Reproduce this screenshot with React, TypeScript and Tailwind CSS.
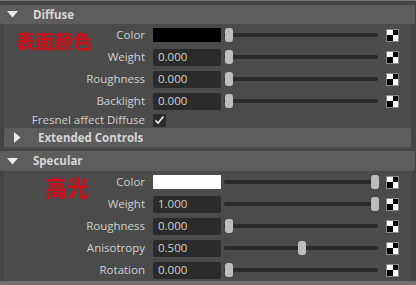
import React from "react";

type Row = {
  label: string;
  value?: string;
  swatch?: string;
  pos: number;
};

const DIFFUSE: Row[] = [
  { label: "Color", swatch: "#000000", pos: 0 },
  { label: "Weight", value: "0.000", pos: 0 },
  { label: "Roughness", value: "0.000", pos: 0 },
  { label: "Backlight", value: "0.000", pos: 0 },
];

const SPECULAR: Row[] = [
  { label: "Color", swatch: "#ffffff", pos: 1 },
  { label: "Weight", value: "1.000", pos: 1 },
  { label: "Roughness", value: "0.000", pos: 0 },
  { label: "Anisotropy", value: "0.500", pos: 0.5 },
  { label: "Rotation", value: "0.000", pos: 0 },
];

function Checker() {
  return (
    <div className="w-[13px] h-[13px] border border-[#8a8a8a] grid grid-cols-2 grid-rows-2 shrink-0">
      <div className="bg-white" />
      <div className="bg-black" />
      <div className="bg-black" />
      <div className="bg-white" />
    </div>
  );
}

function Slider({ pos }: { pos: number }) {
  return (
    <div className="relative w-[154px] h-[14px] flex items-center shrink-0">
      <div className="w-full h-[4px] rounded-full bg-[#2b2b2b]" />
      <div
        className="absolute top-0 w-[8px] h-[14px] rounded-[3px] bg-[#bdbdbd]"
        style={{ left: 1 + pos * 146 }}
      />
    </div>
  );
}

function AttrRow({ row }: { row: Row }) {
  return (
    <div className="h-[22px] flex items-center">
      <div className="w-[141px] text-right text-[11.5px] text-[#cfcfcf]">{row.label}</div>
      <div className="ml-[8px] w-[68px] shrink-0">
        {row.swatch ? (
          <div className="h-[14px]" style={{ background: row.swatch }} />
        ) : (
          <div className="h-[17px] rounded-[2px] bg-[#2b2b2b] pl-[5px] flex items-center text-[11.5px] text-[#d2d2d2]">
            {row.value}
          </div>
        )}
      </div>
      <div className="ml-[3px]">
        <Slider pos={row.pos} />
      </div>
      <div className="ml-[8px]">
        <Checker />
      </div>
    </div>
  );
}

function Header({ title, open, h }: { title: string; open: boolean; h: string }) {
  return (
    <div className={`${h} bg-[#5d5d5d] rounded-[2px] flex items-center`}>
      {open ? (
        <svg width="11" height="7" viewBox="0 0 11 7" className="ml-[7px] mr-[15px]">
          <polygon points="0,0 11,0 5.5,6.5" fill="#ececec" />
        </svg>
      ) : (
        <svg width="7" height="11" viewBox="0 0 7 11" className="ml-[10px] mr-[17px]">
          <polygon points="0,0 6.5,5.5 0,11" fill="#ececec" />
        </svg>
      )}
      <span className="font-bold text-[11.5px] text-[#d6d6d6]">{title}</span>
    </div>
  );
}

export default function App() {
  return (
    <div
      className="w-[416px] h-[285px] bg-[#444444] overflow-hidden relative border-t border-[#777777]"
      style={{ fontFamily: '"Open Sans", "Liberation Sans", sans-serif' }}
    >
      <div className="pt-[4px] pr-[1px]">
        <Header title="Diffuse" open h="h-[19px]" />
        <div className="relative ml-[4px] mr-[4px] bg-[#4b4b4b] pb-[2px]">
          {DIFFUSE.map((r) => (
            <AttrRow key={r.label} row={r} />
          ))}
          <div className="h-[16px] flex items-center">
            <div className="w-[141px] text-right text-[11.5px] text-[#cfcfcf]">Fresnel affect Diffuse</div>
            <div className="ml-[8px] w-[13px] h-[13px] bg-[#2b2b2b] flex items-center justify-center">
              <svg width="11" height="10" viewBox="0 0 11 10">
                <polyline points="1.5,5.5 4,8 9.5,1.5" fill="none" stroke="#f2f2f2" strokeWidth="1.6" />
              </svg>
            </div>
          </div>
          <Header title="Extended Controls" open={false} h="h-[19px]" />
          <div
            className="absolute left-[12px] top-[3px] text-[19px] font-black text-[#c4121c] blur-[0.3px]"
            style={{ fontFamily: '"Noto Sans CJK SC", sans-serif' }}
          >
            表面颜色
          </div>
        </div>
        <div className="mt-[2px]">
          <Header title="Specular" open h="h-[20px]" />
        </div>
        <div className="relative ml-[4px] mr-[4px] bg-[#4b4b4b] pb-[1px]">
          {SPECULAR.map((r) => (
            <AttrRow key={r.label} row={r} />
          ))}
          <div
            className="absolute left-[41px] top-[-1px] text-[22px] font-black text-[#c4121c] blur-[0.3px]"
            style={{ fontFamily: '"Noto Sans CJK SC", sans-serif' }}
          >
            高光
          </div>
        </div>
      </div>
      <div className="absolute left-0 right-0 bottom-0 h-[4px] bg-[#707070]" />
    </div>
  );
}
